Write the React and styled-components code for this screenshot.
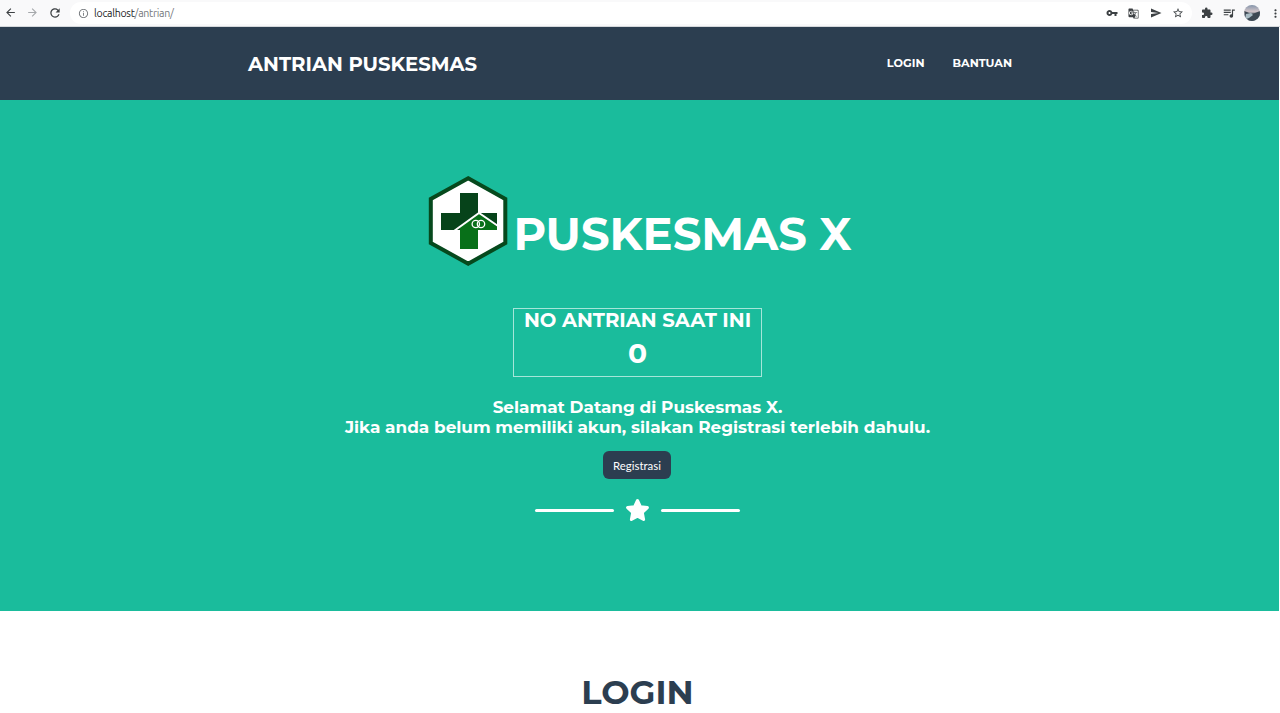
import React from "react";
import styled, { createGlobalStyle } from "styled-components";
import {
  MdArrowBack,
  MdArrowForward,
  MdRefresh,
  MdInfoOutline,
  MdVpnKey,
  MdGTranslate,
  MdSend,
  MdStarBorder,
  MdExtension,
  MdQueueMusic,
  MdMoreVert,
} from "react-icons/md";

const GlobalStyle = createGlobalStyle`
  * { box-sizing: border-box; }
  body {
    margin: 0;
    background: #fff;
    font-family: Montserrat, Inter, sans-serif;
    overflow: hidden;
  }
  h1, h2, h3, p { margin: 0; }
`;

const Page = styled.div`
  height: 713px;
  overflow: hidden;
  display: flex;
  flex-direction: column;
`;

const BrowserBar = styled.div`
  height: 27px;
  flex: none;
  display: flex;
  align-items: center;
  background: #f9f9fa;
  border-bottom: 1px solid #d5d8db;
  color: #3c4043;
`;

const BrowserButtons = styled.div`
  display: flex;
  gap: 9px;
  padding-left: 4px;
  width: 70px;
  flex: none;
  svg { display: block; }
`;

const AddressBar = styled.div`
  width: 1122px;
  flex: none;
  height: 22px;
  border-radius: 11px;
  background: #fff;
  display: flex;
  align-items: center;
  justify-content: space-between;
  padding: 0 8px;
`;

const Address = styled.div`
  display: flex;
  align-items: center;
  gap: 5px;
  font: 10.6px/14px Ubuntu, "Noto Sans", sans-serif;
  letter-spacing: -0.28px;
  color: #74787c;
  b { font-weight: 400; color: #202124; }
`;

const ActionIcons = styled.div`
  display: flex;
  align-items: center;
  gap: 10.5px;
  svg { display: block; flex: none; }
`;

const ToolbarIcons = styled(ActionIcons)`
  padding-left: 9px;
  gap: 8.5px;
`;

const Site = styled.div`
  width: 1279px;
  flex: 1;
`;

const NavBar = styled.nav`
  height: 73px;
  background: #2c3e50;
  color: #fff;
  display: flex;
  justify-content: space-between;
  padding: 0 267px 0 248px;
`;

const Brand = styled.div`
  font-weight: 700;
  font-size: 19.65px;
  line-height: 24px;
  margin-top: 25px;
  white-space: nowrap;
`;

const NavLinks = styled.div`
  display: flex;
  gap: 28px;
  margin-top: 28px;
`;

const NavLink = styled.span`
  font-weight: 700;
  font-size: 11.25px;
  line-height: 16px;
`;

const Hero = styled.header`
  height: 511px;
  padding: 76px 4px 0 0;
  background: #1abc9c;
  color: #fff;
  display: flex;
  flex-direction: column;
  align-items: center;
`;

const Masthead = styled.div`
  display: flex;
  margin-left: 5px;
  height: 90px;
  svg { display: block; }
`;

const Title = styled.h1`
  font-size: 44.8px;
  line-height: 54px;
  margin: 31px 0 0 5px;
  font-weight: 700;
  white-space: nowrap;
`;

const QueueBox = styled.div`
  width: 249px;
  height: 69px;
  margin-top: 42px;
  border: 1px solid #a6e6d9;
  text-align: center;
`;

const QueueLabel = styled.h3`
  font-size: 19.65px;
  line-height: 22px;
  font-weight: 700;
  white-space: nowrap;
`;

const QueueNumber = styled.div`
  font-size: 28.1px;
  line-height: 34px;
  margin-top: 5px;
  font-weight: 700;
`;

const Welcome = styled.div`
  margin-top: 21px;
  text-align: center;
`;

const WelcomeLine = styled.p`
  font-size: 16.85px;
  line-height: 19.5px;
  font-weight: 700;
  white-space: nowrap;
`;

const RegisterButton = styled.button`
  width: 68px;
  height: 28px;
  margin: 14px 1px 0 0;
  padding: 1px 0 0;
  border: 0;
  border-radius: 6px;
  background: #2c3e50;
  color: #fff;
  font: 11.4px/27px Lato, sans-serif;
`;

const Divider = styled.div`
  display: flex;
  align-items: center;
  gap: 11px;
  margin-top: 19px;
  height: 24px;
`;

const DividerLine = styled.span`
  width: 79px;
  height: 3px;
  border-radius: 2px;
  background: #fff;
`;

const LoginSection = styled.section`
  height: 102px;
  padding: 60px 4px 0 0;
  text-align: center;
`;

const LoginTitle = styled.h2`
  color: #2c3e50;
  font-size: 33.6px;
  line-height: 41px;
  font-weight: 700;
`;

const Avatar = () => (
  <svg width="16" height="16" viewBox="0 0 16 16">
    <defs>
      <clipPath id="avatar"><circle cx="8" cy="8" r="8" /></clipPath>
      <linearGradient id="sky" x1="0" y1="0" x2="0" y2="1">
        <stop offset="0" stopColor="#8494aa" />
        <stop offset="0.4" stopColor="#d0c4c8" />
        <stop offset="0.6" stopColor="#69727e" />
        <stop offset="1" stopColor="#8d9ba8" />
      </linearGradient>
    </defs>
    <g clipPath="url(#avatar)">
      <rect width="16" height="16" fill="url(#sky)" />
      <path d="M0 6l3 1 4 2 4-1 5-2v6l-6 4H4z" fill="#3d4852" />
      <path d="M2 9l5-1 2 2-4 3-3 1z" fill="#a9bcc4" />
    </g>
  </svg>
);

const Logo = () => (
  <svg width="80" height="90" viewBox="0 0 80 90">
    <path d="M40.2 2.3L77.3 23V67L40.2 87.7L2.8 67V23Z" fill="#fff" stroke="#06491d" strokeWidth="4" />
    <path d="M32 17H50V37H69V54H50V73H32V54H13V37H32Z" fill="#06431a" />
    <path d="M32 51L51 38L69 51V54H50V73H32Z" fill="#087019" />
    <path d="M50 54V51L51 38L69 51V54Z" fill="#087019" />
    <path d="M26 55L51 37L70 50" fill="none" stroke="#fff" strokeWidth="2" />
    <circle cx="47.8" cy="48" r="3.7" fill="none" stroke="#fff" strokeWidth="1.3" />
    <circle cx="53" cy="48" r="3.7" fill="none" stroke="#fff" strokeWidth="1.3" />
  </svg>
);

const Star = () => (
  <svg width="25" height="24" viewBox="0 0 25 24">
    <path
      d="M12.5 2.5L15.4 8.7L22.4 9.6L17.3 14.5L18.6 21.5L12.5 18.2L6.4 21.5L7.7 14.5L2.6 9.6L9.6 8.7Z"
      fill="#fff"
      stroke="#fff"
      strokeWidth="3"
      strokeLinejoin="round"
    />
  </svg>
);

export default function App() {
  return (
    <Page>
      <GlobalStyle />
      <BrowserBar>
        <BrowserButtons>
          <MdArrowBack size={13} />
          <MdArrowForward size={13} color="#a5a8ab" />
          <MdRefresh size={14} />
        </BrowserButtons>
        <AddressBar>
          <Address>
            <MdInfoOutline size={11} />
            <span><b>localhost</b>/antrian/</span>
          </Address>
          <ActionIcons>
            <MdVpnKey size={12} />
            <MdGTranslate size={11} />
            <MdSend size={12} />
            <MdStarBorder size={12} />
          </ActionIcons>
        </AddressBar>
        <ToolbarIcons>
          <MdExtension size={12} />
          <MdQueueMusic size={14} />
          <Avatar />
          <MdMoreVert size={13} />
        </ToolbarIcons>
      </BrowserBar>
      <Site>
        <NavBar>
          <Brand>ANTRIAN PUSKESMAS</Brand>
          <NavLinks>
            <NavLink>LOGIN</NavLink>
            <NavLink>BANTUAN</NavLink>
          </NavLinks>
        </NavBar>
        <Hero>
          <Masthead>
            <Logo />
            <Title>PUSKESMAS X</Title>
          </Masthead>
          <QueueBox>
            <QueueLabel>NO ANTRIAN SAAT INI</QueueLabel>
            <QueueNumber>0</QueueNumber>
          </QueueBox>
          <Welcome>
            <WelcomeLine>Selamat Datang di Puskesmas X.</WelcomeLine>
            <WelcomeLine>Jika anda belum memiliki akun, silakan Registrasi terlebih dahulu.</WelcomeLine>
          </Welcome>
          <RegisterButton>Registrasi</RegisterButton>
          <Divider>
            <DividerLine />
            <Star />
            <DividerLine />
          </Divider>
        </Hero>
        <LoginSection>
          <LoginTitle>LOGIN</LoginTitle>
        </LoginSection>
      </Site>
    </Page>
  );
}
